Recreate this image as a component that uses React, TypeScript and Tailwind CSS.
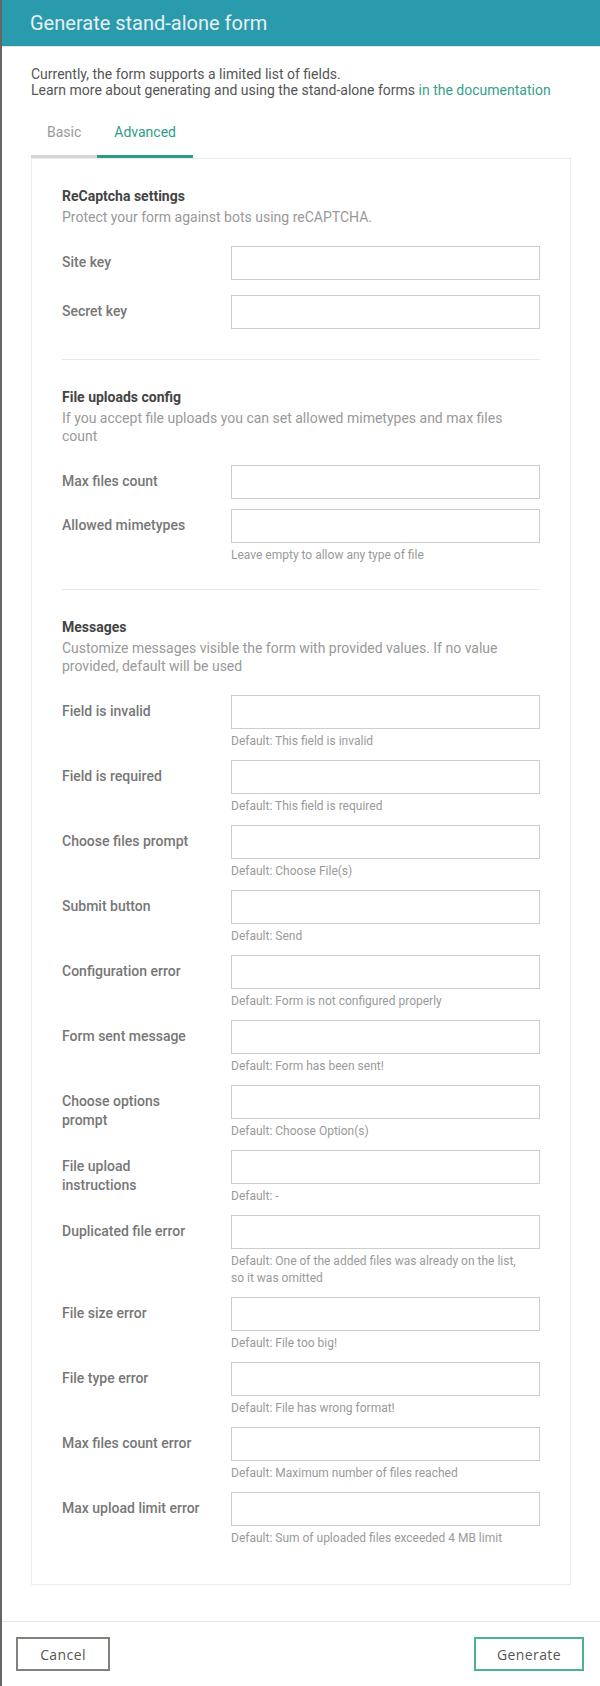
import React from "react";

type Row = { label: string; hint?: string };

const recaptchaRows: Row[] = [{ label: "Site key" }, { label: "Secret key" }];

const uploadRows: Row[] = [
    { label: "Max files count" },
    { label: "Allowed mimetypes", hint: "Leave empty to allow any type of file" },
];

const messageRows: Row[] = [
    { label: "Field is invalid", hint: "Default: This field is invalid" },
    { label: "Field is required", hint: "Default: This field is required" },
    { label: "Choose files prompt", hint: "Default: Choose File(s)" },
    { label: "Submit button", hint: "Default: Send" },
    { label: "Configuration error", hint: "Default: Form is not configured properly" },
    { label: "Form sent message", hint: "Default: Form has been sent!" },
    { label: "Choose options prompt", hint: "Default: Choose Option(s)" },
    { label: "File upload instructions", hint: "Default: -" },
    {
        label: "Duplicated file error",
        hint: "Default: One of the added files was already on the list, so it was omitted",
    },
    { label: "File size error", hint: "Default: File too big!" },
    { label: "File type error", hint: "Default: File has wrong format!" },
    { label: "Max files count error", hint: "Default: Maximum number of files reached" },
    { label: "Max upload limit error", hint: "Default: Sum of uploaded files exceeded 4 MB limit" },
];

const FieldRow = ({ row, gap }: { row: Row; gap: string }) => (
    <div className={`flex gap-[30px] ${gap}`}>
        <label className="w-[139px] shrink-0 pt-[7px] text-[14px] leading-[19px] font-medium text-[#777]">
            {row.label}
        </label>
        <div className="flex-1 min-w-0">
            <input type="text" className="block w-full h-[34px] border border-[#cccccc] bg-white outline-none" />
            {row.hint && (
                <p className="mt-1 pr-[16px] text-[12px] leading-[17px] text-[#9a9a9a]">{row.hint}</p>
            )}
        </div>
    </div>
);

const Section = ({
    title,
    description,
    rows,
    gap,
    border,
}: {
    title: string;
    description: string;
    rows: Row[];
    gap: string;
    border?: boolean;
}) => (
    <div className={`pt-[27px] pb-[15px] ${border ? "border-t border-[#e8e8e8]" : ""}`}>
        <h3 className="text-[14px] leading-5 font-bold text-[#444]">{title}</h3>
        <p className="mt-[2px] mb-5 text-[14px] leading-[18px] text-[#999]">{description}</p>
        {rows.map((row) => (
            <FieldRow key={row.label} row={row} gap={gap} />
        ))}
    </div>
);

export default function App() {
    return (
        <div className="w-full min-h-[1686px] bg-white border-l-2 border-[#666] font-[family-name:Roboto,sans-serif] flex flex-col">
            {/* Header */}
            <div className="h-[46px] bg-[#2a9aad] border-b border-[#e5e5e5] box-content flex items-center pl-[28px]">
                <h2 className="text-[20px] text-[#e8eff1]">Generate stand-alone form</h2>
            </div>

            {/* Body */}
            <div className="pl-[29px] pr-[29px] pt-[19px] pb-[36px]">
                <p className="text-[14px] leading-[16px] text-[#555]">
                    Currently, the form supports a limited list of fields.
                    <br />
                    Learn more about generating and using the stand-alone forms{" "}
                    <a href="#" className="text-[#36a28a]">
                        in the documentation
                    </a>
                </p>

                {/* Tabs */}
                <div className="mt-6 flex">
                    <button className="px-4 pb-[13px] text-[14px] leading-5 text-[#999] border-b-[3px] border-[#d6d6d6]">
                        Basic
                    </button>
                    <button className="px-[17px] pb-[13px] text-[14px] leading-5 text-[#2f9c87] border-b-[3px] border-[#2f9a88]">
                        Advanced
                    </button>
                </div>

                {/* Card */}
                <div className="border border-[#ececec] px-[30px] pb-[12px]">
                    <Section
                        title="ReCaptcha settings"
                        description="Protect your form against bots using reCAPTCHA."
                        rows={recaptchaRows}
                        gap="mb-[15px]"
                    />
                    <Section
                        title="File uploads config"
                        description="If you accept file uploads you can set allowed mimetypes and max files count"
                        rows={uploadRows}
                        gap="mb-[10px]"
                        border
                    />
                    <Section
                        title="Messages"
                        description="Customize messages visible the form with provided values. If no value provided, default will be used"
                        rows={messageRows}
                        gap="mb-[10px]"
                        border
                    />
                </div>
            </div>

            {/* Footer */}
            <div className="mt-auto border-t border-[#e5e5e5] pt-[15px] pb-[15px] pl-[14px] pr-4 flex justify-between">
                <button className="w-[94px] h-[34px] border-2 border-[#82827d] text-[14px] tracking-[0.4px] text-[#555] font-[family-name:'Open_Sans',sans-serif]">
                    Cancel
                </button>
                <button className="w-[110px] h-[34px] border-2 border-[#4db38e] text-[14px] tracking-[0.4px] text-[#555] font-[family-name:'Open_Sans',sans-serif]">
                    Generate
                </button>
            </div>
        </div>
    );
}
